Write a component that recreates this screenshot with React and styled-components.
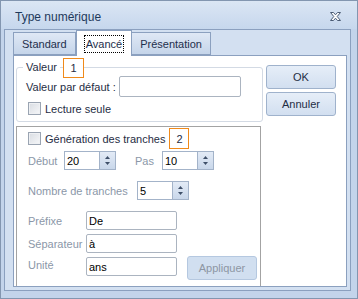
import React from "react";
import styled, { createGlobalStyle } from "styled-components";

const Global = createGlobalStyle`
  html, body { margin: 0; padding: 0; background: #ffffff; }
  body { font-family: "Liberation Sans", Arial, sans-serif; font-size: 11px; }
  * { box-sizing: border-box; }
`;

const Window = styled.div`
  width: 358px;
  height: 299px;
  border: 1px solid #8396b0;
  background: #c3d4eb;
  display: flex;
  flex-direction: column;
  color: #1f2d44;
`;

const TitleBar = styled.div`
  height: 28px;
  flex: none;
  display: flex;
  align-items: center;
  padding: 3px 15px 0 14px;
  background: linear-gradient(#dbe6f4, #c6d7ed);
`;

const Title = styled.div`
  flex: 1;
  font-size: 12px;
  color: #1e395b;
`;

const Client = styled.div`
  flex: 1;
  margin: 0 6px 7px 3px;
  border: 1px solid #8ba0bf;
  background: #d3e0f1;
  padding: 0 3px 3px 8px;
  display: flex;
  flex-direction: column;
`;

const TabStrip = styled.div`
  display: flex;
  align-items: flex-end;
  height: 25px;
  flex: none;
  position: relative;
  z-index: 1;
`;

const Tab = styled.div`
  height: ${(p) => (p.$active ? 26 : 23)}px;
  margin-bottom: ${(p) => (p.$active ? -1 : 0)}px;
  padding: 0 8px;
  border: 1px solid #8ba0bf;
  border-bottom: ${(p) => (p.$active ? "none" : "1px solid #8ba0bf")};
  background: ${(p) => (p.$active ? "#ffffff" : "linear-gradient(#dfe8f5, #c5d5ea)")};
  display: flex;
  align-items: center;
  color: #1e2f4c;
  font-size: 11px;
  margin-left: ${(p) => (p.$first ? 0 : p.$active ? 0 : -1)}px;
`;

const Focus = styled.span`
  outline: 1px dotted #000;
  padding: 2px 1px;
  line-height: 12px;
`;

const Panel = styled.div`
  flex: 1;
  background: #ffffff;
  border: 1px solid #8ba0bf;
  display: flex;
  flex-direction: column;
  padding: 0 0 0 2px;
  overflow: hidden;
`;

const TopRow = styled.div`
  display: flex;
  align-items: flex-start;
  gap: 3px;
`;

const Group = styled.fieldset`
  position: relative;
  margin: 5px 0 0 0;
  width: ${(p) => p.$w}px;
  border: 1px solid #d3dae4;
  border-radius: 3px;
  padding: 3px 6px 6px 9px;
  min-width: 0;
`;

const Legend = styled.legend`
  padding: 0 3px;
  margin-left: -3px;
  line-height: 12px;
  font-size: 11px;
  color: #1f2d44;
`;

const Badge = styled.div`
  width: ${(p) => p.$w || 21}px;
  height: ${(p) => p.$h || 20}px;
  border: 1.5px solid #f08a1a;
  background: #fff;
  display: flex;
  align-items: center;
  justify-content: center;
  font-size: 11px;
  color: #1f2d44;
`;

const FloatBadge = styled(Badge)`
  position: absolute;
  left: 46px;
  top: -15px;
`;

const Row = styled.div`
  display: flex;
  align-items: ${(p) => p.$align || "center"};
  margin-top: ${(p) => p.$mt || 0}px;
  gap: ${(p) => p.$gap || 0}px;
`;

const Label = styled.span`
  width: ${(p) => (p.$w ? `${p.$w}px` : "auto")};
  flex: none;
  color: ${(p) => (p.$dim ? "#8b97a8" : "#1f2d44")};
  font-size: 11px;
  white-space: nowrap;
  margin-top: ${(p) => p.$mt || 0}px;
  margin-left: ${(p) => p.$ml || 0}px;
`;

const TextInput = styled.div`
  width: ${(p) => p.$w}px;
  height: ${(p) => p.$h || 19}px;
  border: 1px solid #abb4c0;
  border-radius: 2px;
  background: #fff;
  padding-left: 2px;
  display: flex;
  align-items: center;
  font-size: 11px;
  color: #000;
`;

const Check = styled.span`
  width: 13px;
  height: 13px;
  flex: none;
  border: 1px solid #9aa4b2;
  background: linear-gradient(135deg, #d8dce2, #f6f7f9);
  box-shadow: inset 0 0 0 1px #eef0f3;
  margin-left: ${(p) => p.$ml || 0}px;
`;

const Buttons = styled.div`
  display: flex;
  flex-direction: column;
  gap: 3px;
  margin-top: 9px;
`;

const Button = styled.div`
  width: 70px;
  height: 24px;
  border: 1px solid ${(p) => (p.$disabled ? "#b5c8e0" : "#9fb2cc")};
  border-radius: 3px;
  background: ${(p) =>
    p.$disabled ? "#d1dff0" : "linear-gradient(#e6eef8, #d2dff0)"};
  display: flex;
  align-items: center;
  justify-content: center;
  font-size: 11px;
  color: ${(p) => (p.$disabled ? "#8d96a3" : "#1f2d44")};
  margin-left: ${(p) => p.$ml || 0}px;
  margin-top: ${(p) => p.$mt || 0}px;
`;

const Section = styled.div`
  flex: 1;
  width: 245px;
  margin-top: 4px;
  border: 1px solid #a3a3a3;
  border-bottom: none;
  padding: 1px 0 0 11px;
  display: flex;
  flex-direction: column;
`;

const SpinBox = styled.div`
  width: 52px;
  height: 19px;
  flex: none;
  display: flex;
  border: 1px solid #a3b3c9;
  background: #fff;
`;

const SpinValue = styled.div`
  flex: 1;
  padding-left: 2px;
  display: flex;
  align-items: center;
  font-size: 11px;
  color: #000;
`;

const SpinButtons = styled.div`
  width: 16px;
  border-left: 1px solid #a3b3c9;
  background: linear-gradient(#e3ebf6, #c9d7ea);
  display: flex;
  align-items: center;
  justify-content: center;
`;

function Spin({ value }) {
  return (
    <SpinBox>
      <SpinValue>{value}</SpinValue>
      <SpinButtons>
        <svg width="7" height="11" viewBox="0 0 7 11">
          <path d="M3.5 1 L6 4 H1 Z" fill="#3e4f68" />
          <path d="M3.5 10 L6 7 H1 Z" fill="#3e4f68" />
        </svg>
      </SpinButtons>
    </SpinBox>
  );
}

function CloseIcon() {
  return (
    <svg width="13" height="11" viewBox="0 0 13 11">
      <path
        d="M1.5 1.5 H4.5 L6.5 3.8 L8.5 1.5 H11.5 L8.2 5.5 L11.5 9.5 H8.5 L6.5 7.2 L4.5 9.5 H1.5 L4.8 5.5 Z"
        fill="#ffffff"
        stroke="#4b5c75"
        strokeWidth="1"
        strokeLinejoin="round"
      />
    </svg>
  );
}

export default function App() {
  return (
    <>
      <Global />
      <Window>
        <TitleBar>
          <Title>Type numérique</Title>
          <CloseIcon />
        </TitleBar>
        <Client>
          <TabStrip>
            <Tab $first>Standard</Tab>
            <Tab $active>
              <Focus>Avancé</Focus>
            </Tab>
            <Tab>Présentation</Tab>
          </TabStrip>
          <Panel>
            <TopRow>
              <Group $w={247}>
                <Legend>Valeur</Legend>
                <FloatBadge>1</FloatBadge>
                <Row $gap={3}>
                  <Label>Valeur par défaut :</Label>
                  <TextInput $w={122} $h={21} />
                </Row>
                <Row $mt={5} $gap={4}>
                  <Check $ml={2} />
                  <Label>Lecture seule</Label>
                </Row>
              </Group>
              <Buttons>
                <Button>OK</Button>
                <Button>Annuler</Button>
              </Buttons>
            </TopRow>
            <Section>
              <Row $gap={4}>
                <Check />
                <Label>Génération des tranches</Label>
                <Badge $w={20} $h={21}>2</Badge>
              </Row>
              <Row $mt={2}>
                <Label $dim $w={36}>Début</Label>
                <Spin value="20" />
                <Label $dim $w={27} $ml={19}>Pas</Label>
                <Spin value="10" />
              </Row>
              <Row $mt={11}>
                <Label $dim $w={109}>Nombre de tranches</Label>
                <Spin value="5" />
              </Row>
              <Row $mt={11}>
                <Label $dim $w={58}>Préfixe</Label>
                <TextInput $w={91}>De</TextInput>
              </Row>
              <Row $mt={4}>
                <Label $dim $w={58}>Séparateur</Label>
                <TextInput $w={91}>à</TextInput>
              </Row>
              <Row $mt={4} $align="flex-start">
                <Label $dim $w={58} $mt={2}>Unité</Label>
                <TextInput $w={91}>ans</TextInput>
                <Button $disabled $ml={10} $mt={-1}>Appliquer</Button>
              </Row>
            </Section>
          </Panel>
        </Client>
      </Window>
    </>
  );
}
